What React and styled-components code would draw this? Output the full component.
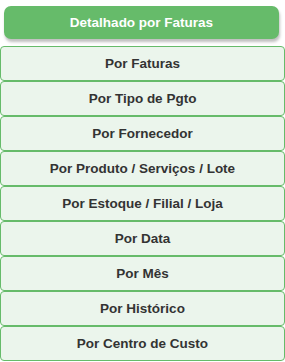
import styled, { createGlobalStyle } from "styled-components";

const items = [
    "Por Faturas",
    "Por Tipo de Pgto",
    "Por Fornecedor",
    "Por Produto / Serviços / Lote",
    "Por Estoque / Filial / Loja",
    "Por Data",
    "Por Mês",
    "Por Histórico",
    "Por Centro de Custo",
];

export default function App() {
    return (
        <>
            <GlobalStyle />
            <Menu>
                <Header>Detalhado por Faturas</Header>
                <List>
                    {items.map((label) => (
                        <Item key={label}>{label}</Item>
                    ))}
                </List>
            </Menu>
        </>
    );
}

const GlobalStyle = createGlobalStyle`
    body {
        margin: 0;
        background: #ffffff;
        font-family: "Liberation Sans", Arial, sans-serif;
    }
`;

const Menu = styled.div`
    width: 285px;
    display: flex;
    flex-direction: column;
`;

const Header = styled.div`
    margin: 6px 6px 7px 4px;
    height: 33px;
    border-radius: 7px;
    background-color: #66bb6a;
    color: #ffffff;
    font-size: 13.5px;
    font-weight: 700;
    display: flex;
    justify-content: center;
    align-items: center;
    box-shadow: 1px 3px 3px rgba(0, 0, 0, 0.25);
`;

const List = styled.div`
    display: flex;
    flex-direction: column;
`;

const Item = styled.div`
    box-sizing: border-box;
    height: 35px;
    border: 1px solid #66bb6a;
    border-radius: 4px;
    background-color: #ebf5ec;
    color: #333333;
    font-size: 13.5px;
    font-weight: 700;
    display: flex;
    justify-content: center;
    align-items: center;
    cursor: pointer;
`;
